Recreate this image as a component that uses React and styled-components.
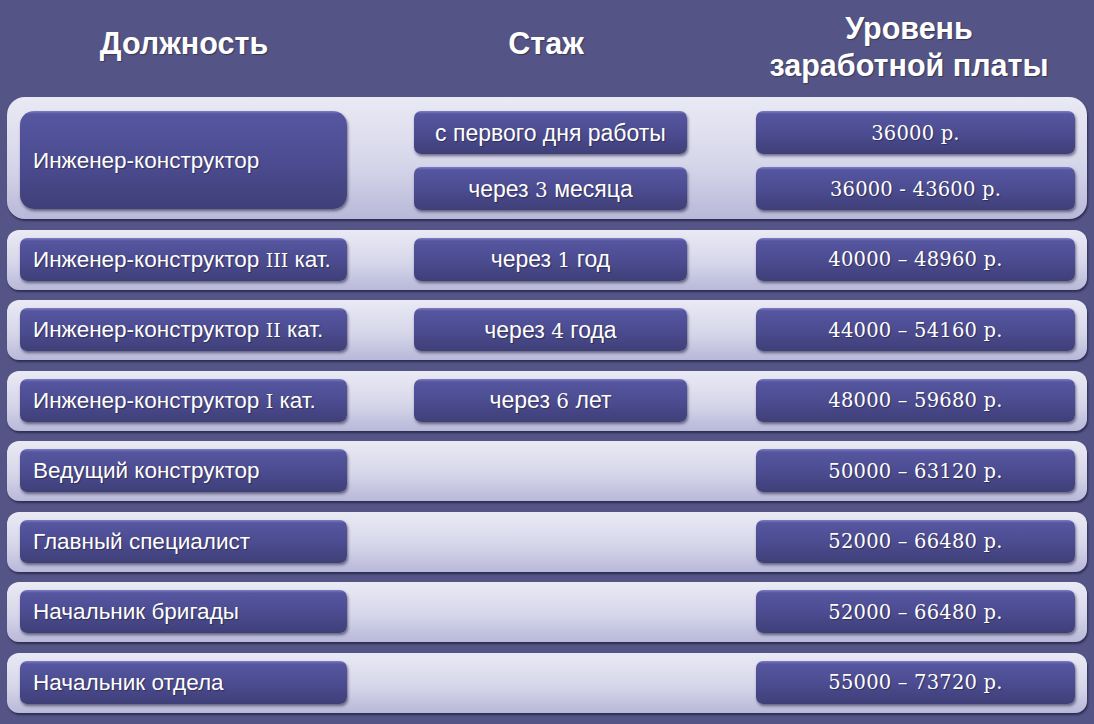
import styled, { createGlobalStyle } from "styled-components";

const GlobalStyle = createGlobalStyle`
  html, body {
    margin: 0;
    padding: 0;
    background: #545486;
  }
  body {
    font-family: "Liberation Sans", Arial, sans-serif;
  }
`;

const Page = styled.div`
  width: 1094px;
  height: 724px;
  padding: 0 7px;
  box-sizing: border-box;
  background: #545486;
  overflow: hidden;
`;

const Header = styled.div`
  display: grid;
  grid-template-columns: 354px 370px 1fr;
  align-items: center;
  height: 97px;
  color: #fff;
  font-weight: bold;
  font-size: 30.5px;
  line-height: 37px;
  text-align: center;
  text-shadow: 1px 1px 1px rgba(0, 0, 0, 0.35);
`;

const HeadCell = styled.div`
  padding-bottom: ${p => (p.$multi ? "4px" : "10px")};
`;

const Rows = styled.div`
  display: flex;
  flex-direction: column;
  gap: 10.5px;
`;

const Panel = styled.div`
  display: grid;
  grid-template-columns: 327px 273px 321px;
  column-gap: 67px;
  row-gap: 13px;
  padding: ${p => (p.$big ? "14px 10px 9px 13px" : "8px 10px 9px 13px")};
  border-radius: ${p => (p.$big ? "18px" : "12px")};
  background: linear-gradient(180deg, #eaeaf5 0%, #d6d6ea 55%, #b8b8d9 100%);
  box-shadow: 1px 2px 2px rgba(20, 20, 50, 0.6);
`;

const Cell = styled.div`
  display: flex;
  align-items: center;
  justify-content: ${p => (p.$center ? "center" : "flex-start")};
  height: ${p => (p.$tall ? "98px" : "43px")};
  box-sizing: border-box;
  padding: 1px 13px 0;
  margin-left: ${p => (p.$pay ? "2px" : "0")};
  grid-row: ${p => (p.$tall ? "span 2" : "auto")};
  border-radius: ${p => (p.$tall ? "14px" : "7px")};
  background: linear-gradient(180deg, #7d7dc6 0px, #5656a0 3px, #4c4c92 50%, #3f3f78 100%);
  box-shadow: 1px 2px 3px rgba(20, 20, 50, 0.55);
  color: #fff;
  font-size: ${p => (p.$center ? "23px" : "22.5px")};
  white-space: nowrap;
  text-shadow: 1px 1px 1px rgba(0, 0, 0, 0.35);
  font-family: "Liberation Sans", Arial, sans-serif;
`;

const Pay = styled.span`
  font-family: "DejaVu Serif", serif;
  font-size: 19.5px;
  letter-spacing: 0.2px;
`;

const Empty = styled.div``;

const Num = styled.span`
  font-family: "DejaVu Serif", serif;
  font-size: ${p => (p.$roman ? "19px" : "20px")};
`;

const rows = [
  { title: <>Инженер-конструктор <Num $roman>III</Num> кат.</>, exp: <>через <Num>1</Num> год</>, pay: "40000 – 48960 р." },
  { title: <>Инженер-конструктор <Num $roman>II</Num> кат.</>, exp: <>через <Num>4</Num> года</>, pay: "44000 – 54160 р." },
  { title: <>Инженер-конструктор <Num $roman>I</Num> кат.</>, exp: <>через <Num>6</Num> лет</>, pay: "48000 – 59680 р." },
  { title: "Ведущий конструктор", pay: "50000 – 63120 р." },
  { title: "Главный специалист", pay: "52000 – 66480 р." },
  { title: "Начальник бригады", pay: "52000 – 66480 р." },
  { title: "Начальник отдела", pay: "55000 – 73720 р." },
];

export default function App() {
  return (
    <Page>
      <GlobalStyle />
      <Header>
        <HeadCell>Должность</HeadCell>
        <HeadCell>Стаж</HeadCell>
        <HeadCell $multi>
          Уровень
          <br />
          заработной платы
        </HeadCell>
      </Header>

      <Rows>
        <Panel $big>
          <Cell $tall><span>Инженер-конструктор</span></Cell>
          <Cell $center><span>с первого дня работы</span></Cell>
          <Cell $center $pay><Pay>36000 р.</Pay></Cell>
          <Cell $center>
            <span>через <Num>3</Num> месяца</span>
          </Cell>
          <Cell $center $pay><Pay>36000 - 43600 р.</Pay></Cell>
        </Panel>

        {rows.map((r, i) => (
          <Panel key={i}>
            <Cell><span>{r.title}</span></Cell>
            {r.exp ? <Cell $center><span>{r.exp}</span></Cell> : <Empty />}
            <Cell $center $pay><Pay>{r.pay}</Pay></Cell>
          </Panel>
        ))}
      </Rows>
    </Page>
  );
}
